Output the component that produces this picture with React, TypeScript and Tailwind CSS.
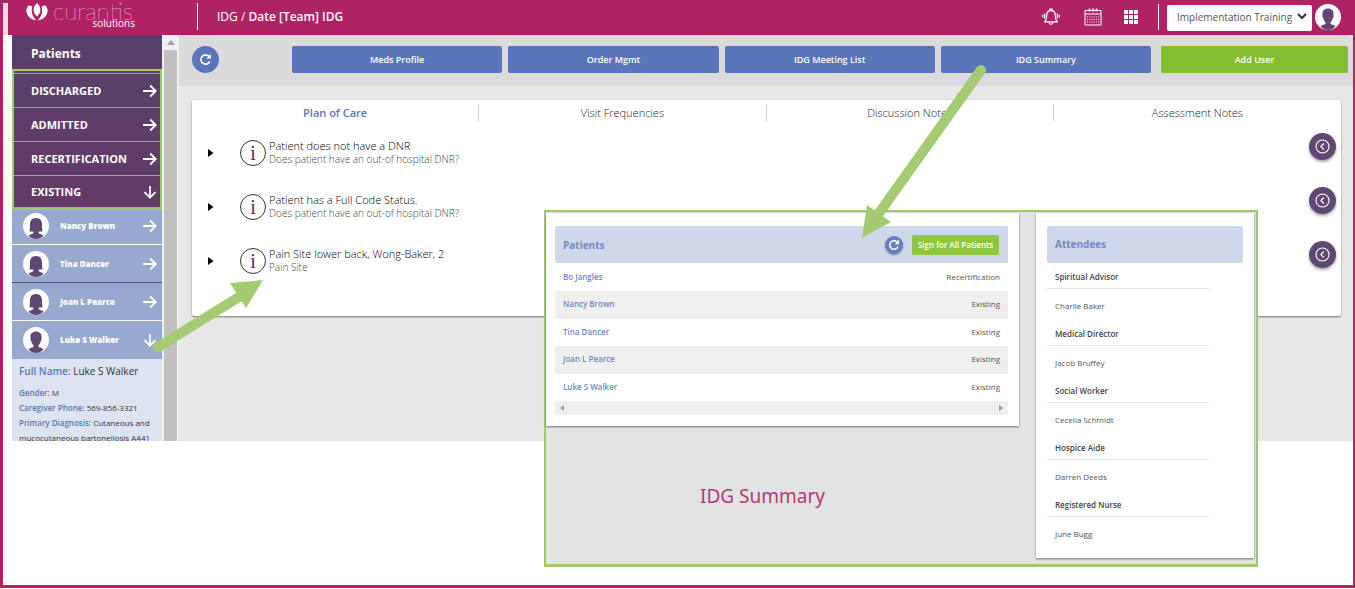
import { type ReactNode } from "react";

const STAGES = [
  { label: "DISCHARGED", open: false },
  { label: "ADMITTED", open: false },
  { label: "RECERTIFICATION", open: false },
  { label: "EXISTING", open: true },
];

const SIDEBAR_PATIENTS = [
  { name: "Nancy Brown", open: false, female: true, divider: "border-b border-white" },
  { name: "Tina Dancer", open: false, female: true, divider: "border-b border-[#5f4874]" },
  { name: "Joan L Pearce", open: false, female: true, divider: "border-b border-white" },
  { name: "Luke S Walker", open: true, female: false, divider: "" },
];

const ACTIONS = ["Meds Profile", "Order Mgmt", "IDG Meeting List", "IDG Summary"];

const TABS = ["Plan of Care", "Visit Frequencies", "Discussion Notes", "Assessment Notes"];

const PROBLEMS = [
  { title: "Patient does not have a DNR", detail: "Does patient have an out-of hospital DNR?" },
  { title: "Patient has a Full Code Status.", detail: "Does patient have an out-of hospital DNR?" },
  { title: "Pain Site lower back, Wong-Baker, 2", detail: "Pain Site" },
];

const SUMMARY = [
  { name: "Bo Jangles", status: "Recertification" },
  { name: "Nancy Brown", status: "Existing" },
  { name: "Tina Dancer", status: "Existing" },
  { name: "Joan L Pearce", status: "Existing" },
  { name: "Luke S Walker", status: "Existing" },
];

const ATTENDEES = [
  { role: "Spiritual Advisor", name: "Charlie Baker" },
  { role: "Medical Director", name: "Jacob Bruffey" },
  { role: "Social Worker", name: "Cecelia Schmidt" },
  { role: "Hospice Aide", name: "Darren Deeds" },
  { role: "Registered Nurse", name: "June Bugg" },
];

function Arrow({ down }: { down: boolean }) {
  return (
    <svg viewBox="0 0 14 14" className="size-[14px] shrink-0" fill="none" stroke="white" strokeWidth="1.8">
      {down ? <path d="M7 1v11.5M1.5 7.2 7 12.7l5.5-5.5" /> : <path d="M0 7h12.5M7.2 1.5 12.7 7l-5.5 5.5" />}
    </svg>
  );
}

function Avatar({ female }: { female: boolean }) {
  return (
    <svg viewBox="0 0 26 26" className="size-[26px] shrink-0">
      <circle cx="13" cy="13" r="13" fill="white" />
      {female ? (
        <path
          d="M13 5c-4.200 0-6 2.800-6 6.400 0 2.600-.1 4.800-.5 7.200h3.800v1.600l-4.900 2.300C7.200 24.800 10.200 26 13 26s5.800-1.200 7.600-3.500l-4.900-2.300v-1.600h3.800c-.4-2.400-.5-4.600-.5-7.200C19 7.800 17.200 5 13 5Z"
          fill="#5f4874"
        />
      ) : (
        <path
          d="M13 4.500c-3.600 0-5.700 2.300-5.600 5.500l.2 1.600c-.5.700 0 2.400.8 2.800.3 1.700 1 2.900 2 3.700V20l-5 2.100C7.200 24.600 10.200 26 13 26s5.800-1.400 7.600-3.900l-5-2.100v-1.900c1-.8 1.700-2 2-3.700.8-.4 1.300-2.100.8-2.800l.2-1.600c.1-3.200-2-5.500-5.600-5.500Z"
          fill="#5f4874"
        />
      )}
    </svg>
  );
}

function RefreshIcon() {
  return (
    <svg viewBox="0 0 14 14" className="size-full" fill="none" stroke="white" strokeWidth="1.800">
      <path d="M11.600 9A5 5 0 1 1 10.500 3.400L11.800 4.800" />
      <path d="M12.800 1v5H7.800Z" fill="white" stroke="none" />
    </svg>
  );
}

function Logo() {
  return (
    <a href="#" aria-label="curantis solutions" className="ml-[18px] flex items-start">
      <svg viewBox="0 0 22 18" className="mt-[3px] h-[18px] w-[22px]" fill="white">
        <path d="M11 0C8.600 2.200 7.600 4.400 7.600 7c0 2.400 1.300 4.500 3.400 6.600 2.100-2.100 3.400-4.200 3.400-6.600C14.400 4.400 13.400 2.200 11 0Z" />
        <path d="M2.700 2.200 6.300 3.400C5 8 6 12.700 10.300 17.500 4.200 16.600.5 12.500.4 7.500c.1-2 .9-3.800 2.300-5.300Z" />
        <path d="m19.300 2.200-3.600 1.200c1.300 4.600.3 9.300-4 14.100 6.100-.9 9.800-5 9.900-10-.1-2-.9-3.800-2.300-5.300Z" />
      </svg>
      <span className="ml-[5px] flex w-[82px] flex-col text-white">
        <span className="h-[18px] font-[Lato] text-[24px] leading-[22px] font-thin">curantis</span>
        <span className="text-right text-[10px] leading-[10px]">solutions</span>
      </span>
    </a>
  );
}

function BellIcon() {
  return (
    <svg viewBox="0 0 18 18" className="h-[18px] w-[18px]" fill="none" stroke="white" strokeWidth="1.200">
      <path d="M9 2.700c-2.800 0-4.200 2-4.200 4.600 0 3.200-.8 4.900-2 6.500h12.400c-1.200-1.600-2-3.300-2-6.500C13.200 4.700 11.800 2.700 9 2.700Z" />
      <path d="M7.800 2.500V1.200h2.400v1.300M7 14.200c.2 1.500 1 2.300 2 2.300s1.800-.8 2-2.300M2.700 5.600v5M.8 6.700v2.800M15.300 5.600v5M17.200 6.700v2.800" />
    </svg>
  );
}

function CalendarIcon() {
  return (
    <svg viewBox="0 0 18 18" className="h-[18px] w-[18px]" fill="none" stroke="white">
      <path d="M1 2.500h16v14.500H1ZM1 6h16" />
      <path d="M5.500.5v3M9 .5v3M12.500.5v3" strokeWidth="1.600" />
      <path d="M3 9h12M3 11.500h12M3 14h12" strokeDasharray="1 1.200" strokeWidth="1.200" />
    </svg>
  );
}

function GridIcon() {
  return (
    <svg viewBox="0 0 14 14" className="size-[14px]" fill="white">
      {[0, 5, 10].map((y) => [0, 5, 10].map((x) => <rect key={`${x}-${y}`} x={x} y={y} width="4" height="4" />))}
    </svg>
  );
}

function Header() {
  return (
    <header className="flex h-[35px] items-start bg-[#b02363] text-white">
      <div className="mt-[3px] h-[32px] w-[5px] bg-[#e3e1e2]" />
      <Logo />
      <div className="mt-[3px] ml-[62px] h-[27px] w-px bg-white" />
      <h1 className="ml-[19px] text-[12px] leading-[34px] font-normal">
        IDG / <strong className="font-semibold">Date [Team] IDG</strong>
      </h1>
      <div className="ml-auto flex h-[34px] items-center">
        <button type="button" aria-label="Notifications" className="mr-[24px]">
          <BellIcon />
        </button>
        <button type="button" aria-label="Calendar" className="mr-[22px]">
          <CalendarIcon />
        </button>
        <button type="button" aria-label="Apps">
          <GridIcon />
        </button>
        <div className="ml-[20px] h-[26px] w-px bg-white" />
        <div className="relative ml-[8px]">
          <select
            aria-label="Organization"
            className="h-[26px] w-[145px] appearance-none rounded-xs bg-white pl-[10px] text-[10px] text-[#555]"
          >
            <option>Implementation Training</option>
          </select>
          <svg
            viewBox="0 0 10 7"
            className="pointer-events-none absolute top-[10px] right-[5px] h-[7px] w-[10px]"
            fill="none"
            stroke="#333"
            strokeWidth="2"
          >
            <path d="m1 1 4 4 4-4" />
          </svg>
        </div>
        <button type="button" aria-label="Account" className="mr-[12px] ml-[3px]">
          <Avatar female={false} />
        </button>
      </div>
    </header>
  );
}

function Detail({ label, children }: { label: string; children: ReactNode }) {
  return (
    <p>
      <span className="font-semibold text-[#5975b8]">{label}:</span> {children}
    </p>
  );
}

function Sidebar() {
  return (
    <aside className="ml-[9px] flex w-[167px] shrink-0 overflow-hidden">
      <div className="w-[150px] shrink-0">
        <div className="bg-linear-to-b from-[#56416b] to-[#643a66]">
          <h2 className="h-[38px] pl-[19px] text-[12px] leading-[38px] font-bold text-white">Patients</h2>
          <div className="relative">
            {STAGES.map((s) => (
              <button
                key={s.label}
                type="button"
                className="flex h-[34px] w-full items-center justify-between border-t border-[#a89bb0] pr-[5px] pl-[19px] text-[11px] leading-[16px] font-bold text-white last-of-type:h-[32px]"
              >
                {s.label}
                <Arrow down={s.open} />
              </button>
            ))}
            {/* highlight round the stage buttons */}
            <div className="pointer-events-none absolute inset-x-0 -top-[4px] -bottom-[3px] border-2 border-[#9fcb68]" />
          </div>
        </div>
        {SIDEBAR_PATIENTS.map((p) => (
          <button
            key={p.name}
            type="button"
            className={`flex h-[38px] w-full items-center bg-[#98a9d0] pr-[5px] pl-[11px] text-[8px] font-extrabold text-white ${p.divider}`}
          >
            <Avatar female={p.female} />
            <span className="ml-[11px]">{p.name}</span>
            <span className="ml-auto">
              <Arrow down={p.open} />
            </span>
          </button>
        ))}
        <div className="bg-[#dde4ef] px-[7px] pt-[4px] text-[8px] leading-[15px] font-medium text-[#333]">
          <div className="mb-[5px] text-[10px] leading-[17px] font-normal">
            <Detail label="Full Name">Luke S Walker</Detail>
          </div>
          <Detail label="Gender">M</Detail>
          <Detail label="Caregiver Phone">569-856-3321</Detail>
          <Detail label="Primary Diagnosis">Cutaneous and mucocutaneous bartonellosis A441</Detail>
        </div>
      </div>
      <div className="flex w-[17px] flex-col items-center bg-[#f1f1f1]">
        <svg viewBox="0 0 8 5" className="my-[5px] h-[5px] w-[8px] shrink-0" fill="#a0a0a0">
          <path d="M0 5 4 0l4 5Z" />
        </svg>
        <div className="w-[13px] flex-1 bg-[#c1c1c1]" />
      </div>
    </aside>
  );
}

function Toolbar() {
  return (
    <div className="flex h-[51px] items-center bg-[#dbdbdb] pr-[5px] pb-[2px] pl-[13px] text-[9px] font-semibold text-white">
      <button type="button" aria-label="Refresh" className="mr-[73px] size-[27px] rounded-full bg-[#5976bb] p-[7px]">
        <RefreshIcon />
      </button>
      <div className="flex flex-1 gap-[6px]">
        {ACTIONS.map((a) => (
          <button key={a} type="button" className="h-[27px] flex-1 rounded-xs bg-[#5976bb]">
            {a}
          </button>
        ))}
      </div>
      <button type="button" className="ml-[10px] h-[27px] w-[187px] rounded-xs bg-[#84bd2f]">
        Add User
      </button>
    </div>
  );
}

function PlanCard() {
  return (
    <section className="mt-[14px] mr-[12px] ml-[13px] rounded-xs bg-white pb-[28px] shadow-[0_1px_2px_rgba(0,0,0,0.5)]">
      <div role="tablist" className="grid h-[26px] grid-cols-4 items-center divide-x divide-[#ccc]">
        {TABS.map((t, i) => (
          <button
            key={t}
            type="button"
            role="tab"
            aria-selected={i === 0}
            className="h-[16px] text-[11px] leading-[14px] font-light text-[#222] aria-selected:font-semibold aria-selected:text-[#5975b8]"
          >
            {t}
          </button>
        ))}
      </div>
      {PROBLEMS.map((p) => (
        <div key={p.title} className="flex h-[54px] items-center pr-[5px] pl-[16px]">
          <button type="button" aria-label={`Expand ${p.title}`}>
            <svg viewBox="0 0 6 8" className="h-[8px] w-[6px]" fill="black">
              <path d="M0 0 5.500 4 0 8Z" />
            </svg>
          </button>
          <span className="ml-[26px] flex size-[26px] items-center justify-center rounded-full border border-[#333] font-['Liberation_Serif',serif] text-[20px] leading-[20px] text-[#552a63]">
            i
          </span>
          <div className="ml-[3px] pb-[2px]">
            <p className="text-[11px] leading-[14px] font-light text-black">{p.title}</p>
            <p className="text-[10px] leading-[13px] font-light text-[#444]">{p.detail}</p>
          </div>
          <button
            type="button"
            aria-label="Open details"
            className="mt-[7px] ml-auto size-[27px] self-start rounded-full bg-[#5f4874] p-[6px] shadow-[0_2px_3px_rgba(0,0,0,0.35)]"
          >
            <svg viewBox="0 0 15 15" className="size-full" fill="none" stroke="white" strokeWidth="1.100">
              <circle cx="7.500" cy="7.500" r="6.500" />
              <path d="M8.800 4.500 5.800 7.500l3 3" />
            </svg>
          </button>
        </div>
      ))}
    </section>
  );
}

function SummaryPanel() {
  return (
    <div className="absolute top-[210px] left-[541px] flex w-[714px] justify-between border-2 border-b-3 border-[#a0c96d] bg-[#e2e3e3] pt-[1px] pr-[2px] pb-[6px]">
      <div className="flex w-[473px] flex-col">
        <section className="bg-white pt-[13px] pr-[11px] pb-[11px] pl-[9px] shadow-[0_1px_2px_rgba(0,0,0,0.5)]">
          <div className="mb-[1px] flex h-[37px] items-center rounded-xs bg-[#cfd8ea] pr-[9px] pl-[8px]">
            <h3 className="text-[10px] leading-[36px] font-bold text-[#7389c4]">Patients</h3>
            <button
              type="button"
              aria-label="Refresh summary"
              className="mr-[9px] ml-auto size-[18px] rounded-full bg-[#6480c2] p-[3px] shadow-[0_1px_2px_rgba(0,0,0,0.4)]"
            >
              <RefreshIcon />
            </button>
            <button type="button" className="h-[20px] w-[87px] rounded-xs bg-[#8dc63f] text-[8px] font-semibold text-white">
              Sign for All Patients
            </button>
          </div>
          <table className="w-full text-[8px]">
            <tbody>
              {SUMMARY.map((r) => (
                <tr key={r.name} className="h-[27px] even:h-[28px] even:bg-[#efefef]">
                  <td className="pb-[2px] pl-[8px]">
                    <a href="#" className="font-semibold text-[#6f86c2]">
                      {r.name}
                    </a>
                  </td>
                  <td className="pr-[8px] pb-[2px] text-right text-[#555]">{r.status}</td>
                </tr>
              ))}
            </tbody>
          </table>
          <div className="flex h-[14px] items-center justify-between bg-[#f0f0f0] px-[5px]">
            <svg viewBox="0 0 4 6" className="h-[6px] w-[4px]" fill="#999">
              <path d="M4 0v6L0 3Z" />
            </svg>
            <svg viewBox="0 0 4 6" className="h-[6px] w-[4px]" fill="#999">
              <path d="M0 0v6l4-3Z" />
            </svg>
          </div>
        </section>
        <p className="mt-[56px] pl-[154px] font-['Noto_Sans','Open_Sans',sans-serif] text-[19px] leading-[28px] text-[#b5387a]">
          IDG Summary
        </p>
      </div>
      <section className="w-[218px] bg-white px-[11px] pt-[13px] pb-[10px] text-[8px] shadow-[0_1px_2px_rgba(0,0,0,0.5)]">
        <h3 className="h-[37px] rounded-xs bg-[#cfd8ea] pl-[8px] text-[10px] leading-[36px] font-bold text-[#7389c4]">
          Attendees
        </h3>
        <dl className="w-[162px]">
          {ATTENDEES.map((a) => (
            <div key={a.role}>
              <dt className="h-[26px] border-b border-[#e6e6e6] pl-[8px] leading-[27px] font-semibold text-[#444]">
                {a.role}
              </dt>
              <dd className="h-[31px] pl-[8px] leading-[33px] text-[#555]">{a.name}</dd>
            </div>
          ))}
        </dl>
      </section>
    </div>
  );
}

function Callouts() {
  return (
    <svg
      viewBox="0 0 1350 585"
      className="pointer-events-none absolute top-0 left-0 h-[585px] w-[1350px]"
      stroke="#a4cb72"
      strokeWidth="10"
      strokeLinecap="round"
      fill="#a4cb72"
    >
      <path d="M978 70 874 216M155 347 236 297" />
      <path d="m859 238 5-33 24 17ZM260 280l-33 3 16 25Z" stroke="none" />
    </svg>
  );
}

export default function App() {
  return (
    <div className="bg-white pb-px font-['Open_Sans',sans-serif]">
      <div className="relative min-h-[588px] border-r-2 border-b-3 border-l-3 border-[#b02363]">
        <Header />
        <div className="flex h-[406px]">
          <Sidebar />
          <main className="min-w-0 flex-1 bg-[#e7e7e7]">
            <Toolbar />
            <PlanCard />
          </main>
        </div>
        <SummaryPanel />
        <Callouts />
      </div>
    </div>
  );
}
